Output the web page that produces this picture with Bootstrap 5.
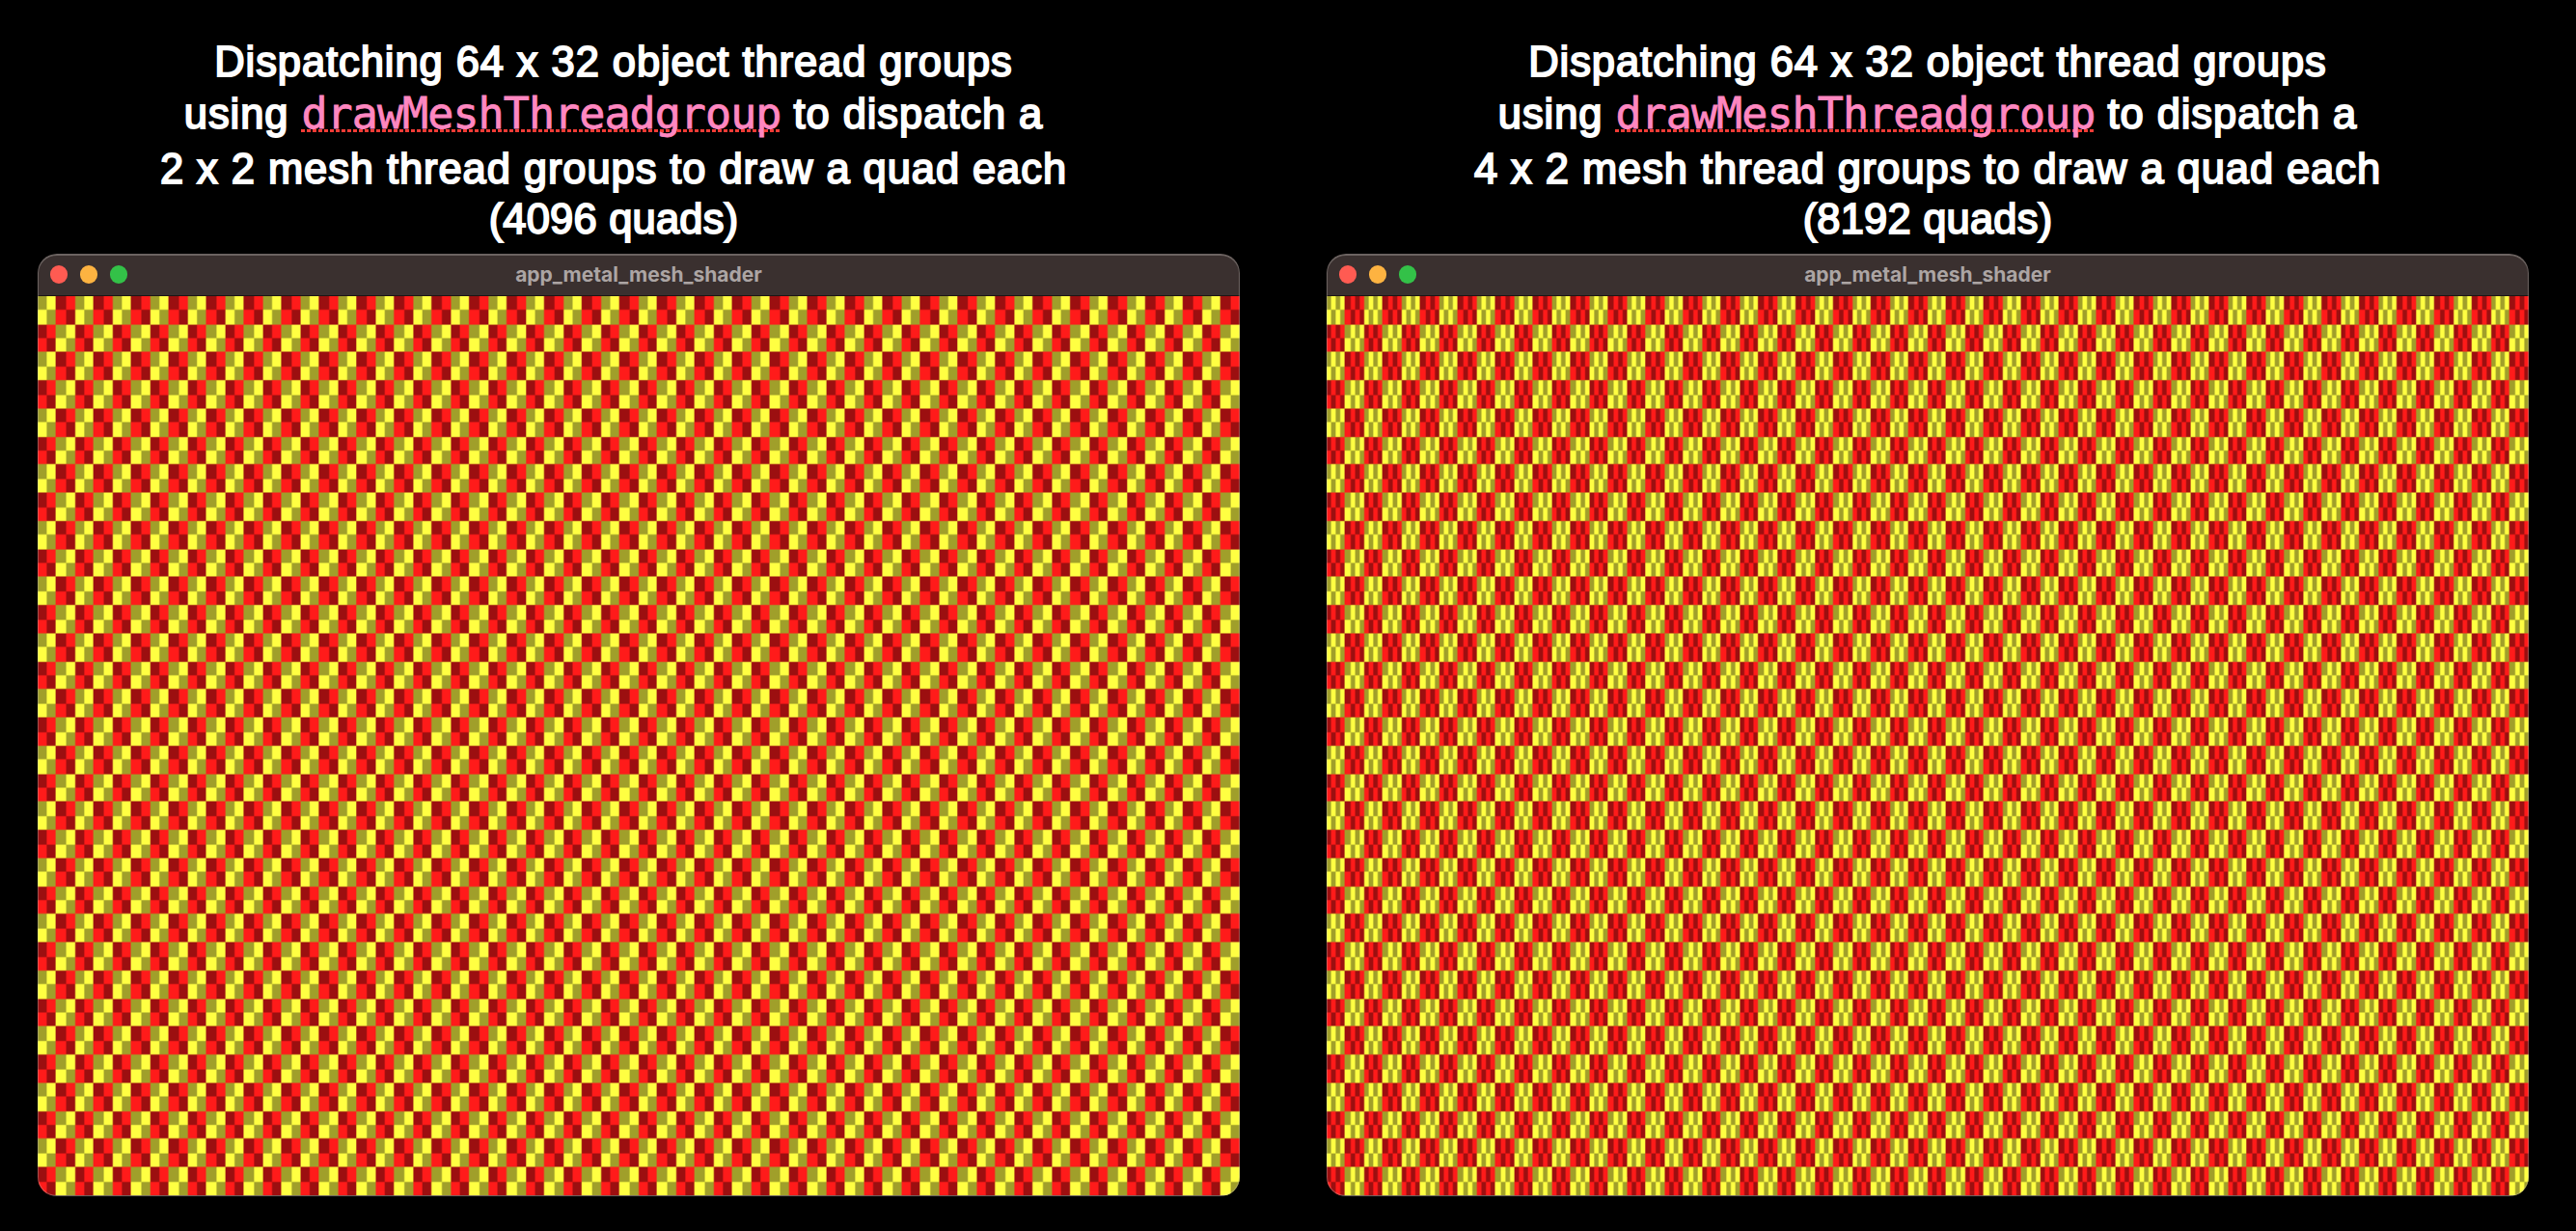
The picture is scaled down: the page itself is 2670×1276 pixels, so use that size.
<!DOCTYPE html>
<html lang="en">
<head>
    <meta charset="UTF-8">
    <meta name="viewport" content="width=device-width, initial-scale=1.0">
    <title>Mesh shader comparison</title>
    <link href="https://cdn.jsdelivr.net/npm/bootstrap@5.3.0/dist/css/bootstrap.min.css" rel="stylesheet">
    <style>
        html,
        body {
            background: #000;
            height: 100%;
            overflow: hidden;
        }

        .demo-panes {
            gap: 90px;
            padding-left: 39px;
        }

        .demo-pane {
            width: 1246px;
        }

        .demo-caption {
            height: 263px;
            padding-top: 37px;
            color: #fff;
            font-family: "Liberation Sans", Arial, sans-serif;
            font-size: 43.5px;
            line-height: 54px;
            letter-spacing: 0.92px;
            white-space: nowrap;
            -webkit-text-stroke: 1.9px #fff;
        }

        .demo-caption-left {
            padding-right: 52px;
        }

        .caption-mesh {
            margin-top: 3px;
        }

        .caption-count {
            margin-top: -2px;
            letter-spacing: 0.2px;
        }

        .caption-code {
            color: #ff87c0;
            font-family: "DejaVu Sans Mono", monospace;
            font-size: 45px;
            line-height: 1;
            letter-spacing: -0.93px;
            -webkit-text-stroke: 0.8px #ff87c0;
            /* spelling underline */
            background: repeating-linear-gradient(90deg, #f33b35 0 4px, transparent 4px 6px) 0 43px / 100% 3px no-repeat;
        }

        .mac-window {
            height: 976.5px;
            border-radius: 20px;
            background: #3a302f;
        }

        /* thin light rim over the window content */
        .mac-window::after {
            content: "";
            position: absolute;
            inset: 0;
            border: 1.5px solid rgba(190, 185, 180, 0.38);
            border-top-width: 2px;
            border-radius: 20px;
        }

        .mac-titlebar {
            height: 43.7px;
            padding: 0 12.8px;
            gap: 12.5px;
            border-bottom: 1px solid #1c1514;
        }

        .mac-light {
            width: 18.5px;
            height: 18.5px;
        }

        .mac-close {
            background: #ff5b52;
        }

        .mac-minimize {
            background: #fdb341;
        }

        .mac-zoom {
            background: #33c148;
        }

        .mac-title {
            color: #aca5a4;
            font-family: Inter, sans-serif;
            font-size: 21px;
            line-height: 1;
        }

        .mesh-view {
            width: 1246px;
            height: 932.8px;
        }
    </style>
</head>
<body>

<div class="demo-panes d-flex">
    <section class="demo-pane flex-shrink-0">
        <div class="demo-caption demo-caption-left text-center">
            <div>Dispatching 64 x 32 object thread groups</div>
            <div>using <code class="caption-code">drawMeshThreadgroup</code> to dispatch a</div>
            <div class="caption-mesh">2 x 2 mesh thread groups to draw a quad each</div>
            <div class="caption-count">(4096 quads)</div>
        </div>
        <div class="mac-window position-relative overflow-hidden">
            <div class="mac-titlebar d-flex align-items-center position-relative">
                <span class="mac-light mac-close rounded-circle"></span>
                <span class="mac-light mac-minimize rounded-circle"></span>
                <span class="mac-light mac-zoom rounded-circle"></span>
                <span class="mac-title position-absolute top-50 start-50 translate-middle fw-bold">app_metal_mesh_shader</span>
            </div>
            <canvas class="mesh-view d-block" data-columns="2" width="800" height="600"></canvas>
        </div>
    </section>
    <section class="demo-pane flex-shrink-0">
        <div class="demo-caption text-center">
            <div>Dispatching 64 x 32 object thread groups</div>
            <div>using <code class="caption-code">drawMeshThreadgroup</code> to dispatch a</div>
            <div class="caption-mesh">4 x 2 mesh thread groups to draw a quad each</div>
            <div class="caption-count">(8192 quads)</div>
        </div>
        <div class="mac-window position-relative overflow-hidden">
            <div class="mac-titlebar d-flex align-items-center position-relative">
                <span class="mac-light mac-close rounded-circle"></span>
                <span class="mac-light mac-minimize rounded-circle"></span>
                <span class="mac-light mac-zoom rounded-circle"></span>
                <span class="mac-title position-absolute top-50 start-50 translate-middle fw-bold">app_metal_mesh_shader</span>
            </div>
            <canvas class="mesh-view d-block" data-columns="4" width="800" height="600"></canvas>
        </div>
    </section>
</div>

<script src="https://cdn.jsdelivr.net/npm/bootstrap@5.3.0/dist/js/bootstrap.bundle.min.js"></script>
<script>
    // 64 x 32 object groups, each split into columns x 2 quads
    const colors = [['#a09f2a', '#ffff42'], ['#9c0f10', '#ff1b1a']];

    // a pixel belongs to a quad when its center is inside
    const snap = value => Math.ceil(value - 0.5);

    document.querySelectorAll('.mesh-view').forEach(function(canvas) {
        const ctx = canvas.getContext('2d');
        const columns = Number(canvas.dataset.columns);
        const total = 64 * columns;

        for (let y = 0; y < 64; y++) {
            const top = snap(y * 600 / 64);
            const bottom = snap((y + 1) * 600 / 64);

            for (let x = 0; x < total; x++) {
                const left = snap(x * 800 / total);
                const right = snap((x + 1) * 800 / total);
                const group = (Math.floor(x / columns) + Math.floor(y / 2)) % 2;

                ctx.fillStyle = colors[group][(x + y) % 2];
                ctx.fillRect(left, top, right - left, bottom - top);
            }
        }
    });
</script>
</body>
</html>
